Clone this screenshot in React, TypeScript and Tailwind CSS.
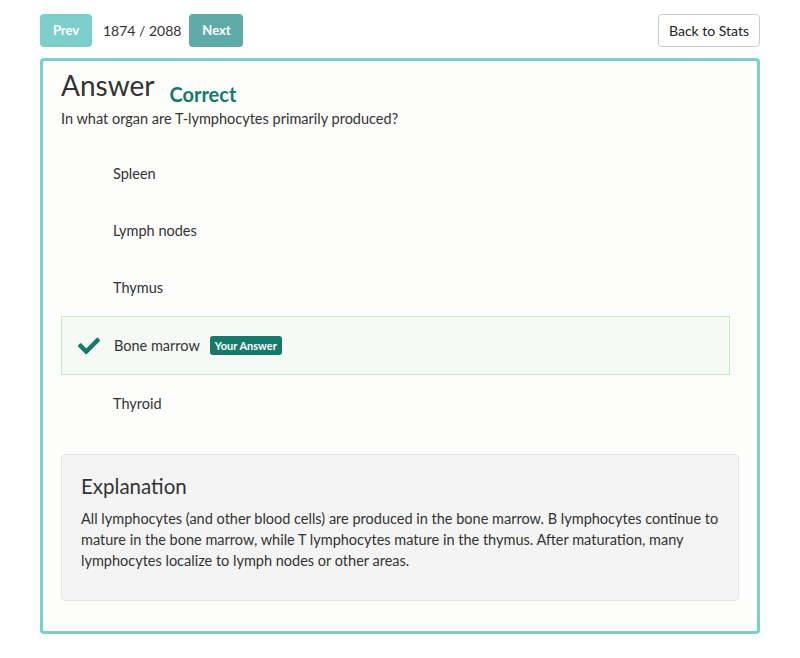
import React from 'react';
import { FaCheck } from 'react-icons/fa';

const options = ['Spleen', 'Lymph nodes', 'Thymus', 'Bone marrow', 'Thyroid'];
const chosen = 'Bone marrow';

const App: React.FC = () => {
    return (
        <div className="min-h-[658px] w-full bg-white px-[40px] font-['Lato',sans-serif] text-[#333]">
            {/* top bar */}
            <div className="flex items-center justify-between pt-[14px]">
                <div className="flex items-center">
                    <button type="button" className="h-[33px] w-[52px] rounded-[4px] bg-[#7dcfcb] text-[13px] font-bold text-white">
                        Prev
                    </button>
                    <span className="ml-[11px] mr-[8px] text-[14px]">1874 / 2088</span>
                    <button type="button" className="h-[33px] w-[54px] rounded-[4px] bg-[#5faaa6] text-[13px] font-bold text-white">
                        Next
                    </button>
                </div>
                <button type="button" className="h-[33px] w-[102px] rounded-[4px] border border-[#ccc] bg-white text-[14px] text-[#222]">
                    Back to Stats
                </button>
            </div>

            {/* card */}
            <div className="mt-[11px] rounded-[4px] border-[3px] border-[#7dcfcb] bg-[#fdfdfb] px-[18px] pt-[9px] pb-[30px]">
                <div className="flex h-[39px] items-start">
                    <h1 className="text-[28px] leading-[31px]">Answer</h1>
                    <span className="ml-[15px] mt-[13px] text-[20px] font-bold leading-[22px] text-[#167a6a]">Correct</span>
                </div>
                <p className="text-[14.5px] leading-[20px]">In what organ are T-lymphocytes primarily produced?</p>

                <div className="mt-[16px] mr-[9px]">
                    {options.map((opt) =>
                        opt === chosen ? (
                            <div key={opt} className="flex h-[59px] items-center border border-[#c6e6be] bg-[#f5faf4] pl-[16px]">
                                <div className="w-[36px]">
                                    <FaCheck size={22} className="text-[#167a6a]" />
                                </div>
                                <span className="text-[14.5px]">{opt}</span>
                                <span className="ml-[10px] rounded-[3px] bg-[#167a6a] px-[5px] text-[11px] font-bold leading-[19px] text-white">
                                    Your Answer
                                </span>
                            </div>
                        ) : (
                            <div key={opt} className="flex h-[57px] items-center pl-[52px]">
                                <span className="text-[14.5px]">{opt}</span>
                            </div>
                        )
                    )}
                </div>

                {/* explanation */}
                <div className="mt-[22px] rounded-[4px] border border-[#e3e3e3] bg-[#f4f4f4] px-[19px] pt-[20px] pb-[29px]">
                    <h3 className="text-[20.5px] leading-[23px]">Explanation</h3>
                    <p className="mt-[10px] text-[14.5px] leading-[21px]">
                        All lymphocytes (and other blood cells) are produced in the bone marrow. B lymphocytes continue to mature in the bone marrow, while T lymphocytes mature in the thymus. After maturation, many lymphocytes localize to lymph nodes or other areas.
                    </p>
                </div>
            </div>
        </div>
    );
};

export default App;
